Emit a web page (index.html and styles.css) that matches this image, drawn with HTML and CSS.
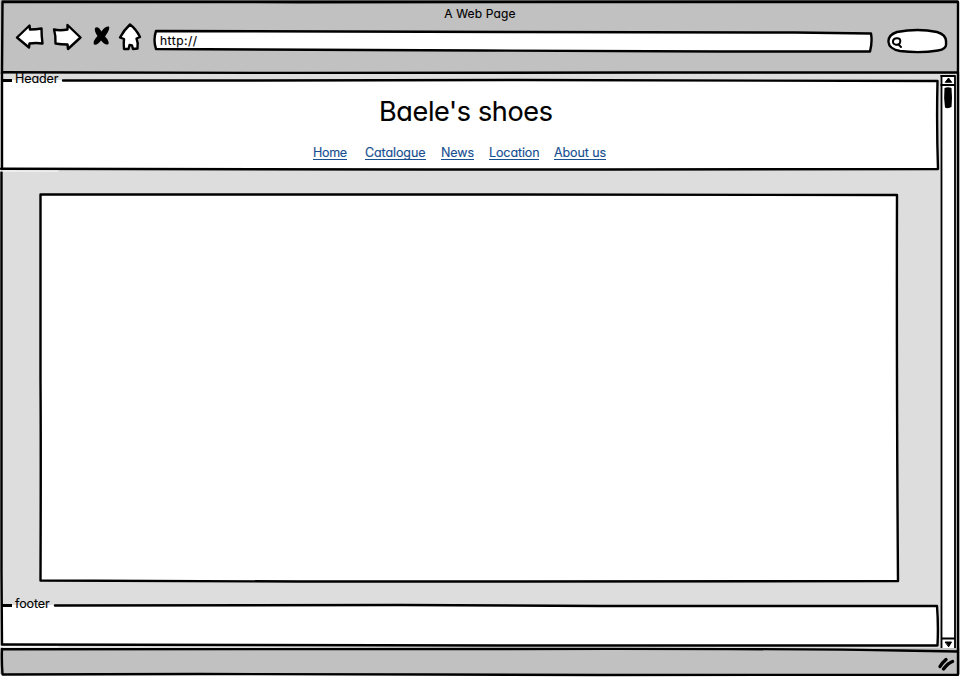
FILE: index.html
```html
<!DOCTYPE html>
<html lang="en">
<head>
<meta charset="utf-8">
<title>A Web Page</title>
<link rel="stylesheet" href="styles.css">
</head>
<body>
<div class="window">
  <header class="chrome">
    <div class="window-title">A Web Page</div>
    <div class="toolbar">
      <svg class="nav-icons" viewBox="14 20 130 34" aria-hidden="true">
        <path class="ink paper" d="M17 37.500L29.500 25.500L30 29.500Q36 29.500 41.500 28.500Q41.500 36 42.500 43.500Q36 42.500 29.500 43.500L29 47.500Z"/>
        <path class="ink paper" d="M54 29.500Q60 31 67.500 29.500L67.500 25L80.500 37.500L68 49L67.500 44.500Q61 44.500 55.500 43.500Q56 36 54 29.500Z"/>
        <path class="solid" d="M95 28Q98 25.500 101.500 31.500Q105 26 109 26.500Q110.500 29 105 36.500Q109.500 41 108.500 44Q105.500 46 101 40.500Q97.500 45.500 94 44.500Q92.500 41 97.500 36Q94 31 95 28Z"/>
        <path class="ink paper" d="M130 24.500Q136 29 140 37L136.500 38.500Q138.500 43 137.500 48.500L133 49L132 45.500L129.500 45L128.500 49L124 49Q123.500 43 124 39L120 37.500Q124 30 130 24.500Z"/>
      </svg>
      <div class="address">
        <svg class="sketch" viewBox="152 28 722 26" aria-hidden="true">
          <path class="ink paper" d="M156 31Q300 31.500 520 32T795 32.500L871 33.500Q872.500 42 870 51.500L720 51.500Q560 51 480 50.500T156 49Q153 40 156 31Z"/>
        </svg>
        <span class="url">http://</span>
      </div>
      <svg class="search" viewBox="886 26 62 28" aria-hidden="true">
        <path class="ink paper" d="M897 32Q918 28 937 32Q947 35 946 43Q947 49 938 50.500Q920 53.500 900 51Q889 49 888.500 42Q888 35 897 32Z"/>
        <path class="lens" d="M896.800 38.200C899.500 38 900.500 39.500 900.300 41.500C900 44 898.500 45 896 44.700C893.500 44.500 892.800 43 893 41C893.300 39 894.500 38.400 896.800 38.200ZM898.500 44.500L901 47"/>
      </svg>
    </div>
    <svg class="sketch" viewBox="0 0 960 74" aria-hidden="true">
      <path class="soft" d="M2 .500H958"/>
      <path class="ink" d="M2 74L2.500 2L300 2.200L958 2L958 74"/>
      <path class="ink" d="M2 72.300L300 73L640 72.500L958 72.500"/>
    </svg>
  </header>

  <div class="viewport">
    <main class="page">
      <section class="panel site-header">
        <svg class="sketch" viewBox="0 79 940 92" aria-hidden="true">
          <path class="paper" d="M2 80H937V169H2Z"/>
          <path class="ink" d="M63 80.500L240 80.500L520 80L937.500 81Q936.500 125 938 169L600 169.500L430 169.500L1 168.800"/>
          <path class="heavy" d="M2 80.500H12"/>
        </svg>
        <span class="legend">Header</span>
        <h1>Baele's shoes</h1>
        <nav>
          <a class="home">Home</a>
          <a class="catalogue">Catalogue</a>
          <a class="news">News</a>
          <a class="location">Location</a>
          <a class="about">About us</a>
        </nav>
      </section>

      <section class="content">
        <svg class="sketch" viewBox="38 192 862 392" aria-hidden="true">
          <path class="ink paper" d="M40.500 194.500L480 194.500L897 195Q896.500 380 898 581L520 581.500L300 581.500L40.500 580.500Q41 450 40.500 380Z"/>
        </svg>
      </section>

      <section class="panel site-footer">
        <svg class="sketch" viewBox="0 604 940 43" aria-hidden="true">
          <path class="paper" d="M2 605H937V645H2Z"/>
          <path class="ink" d="M55 605.500L400 605L600 606L937 606Q938.500 625 937.500 645.500L500 645.500L2 644.500"/>
          <path class="heavy" d="M2 605.500H12"/>
        </svg>
        <span class="legend">footer</span>
      </section>
    </main>

    <aside class="scrollbar">
      <svg class="sketch" viewBox="940 74 20 574" aria-hidden="true">
        <path class="paper" d="M941 76H955V649H941Z"/>
        <path class="fine" d="M941.500 76Q941 300 941.500 649M955 76L955 649M941 76H955M941 85H955M941.500 638.500H955M941.500 649H955"/>
        <path class="ink" d="M958 74V648"/>
        <path class="arrow" d="M945.500 82L948.500 78L951.500 82ZM945.500 642L951.500 642L948.800 646.500Z"/>
        <path class="solid" d="M944.500 88Q948 86.500 951.500 88Q952.500 98 951.500 107Q948 109 945 107.500Q943.500 98 944.500 88Z"/>
      </svg>
    </aside>
    <svg class="sketch" viewBox="0 74 960 574" aria-hidden="true">
      <path class="ink" d="M2 74L2 169M1.500 172L1.500 570L2 644"/>
      <path class="gap" d="M0 171H58M0 646.800H58"/>
    </svg>
  </div>

  <footer class="statusbar">
    <svg class="sketch" viewBox="0 648 960 29" aria-hidden="true">
      <path class="ink" d="M2 649.200L500 649Q800 648.500 900 650.500L958 651.500M958 648L958 674.800L600 675L430 674.500L200 674L2.500 674.500Q1.500 660 2 649"/>
      <path class="grip" d="M940 666.500Q942 663 946 659.500M943.500 669Q948 663 952.500 661.500"/>
    </svg>
  </footer>
</div>
</body>
</html>
```

FILE: styles.css
```css
* {
  box-sizing: border-box;
}

body {
  margin: 0;
  background: #fff;
  color: #000;
  font-family: Inter, "Open Sans", sans-serif;
  font-feature-settings: "cv11";
  font-size: 12.5px;
  line-height: 16px;
  -webkit-text-stroke: 0.15px currentColor;
}

.window {
  display: flex;
  flex-direction: column;
  width: 960px;
  height: 677px;
  overflow: hidden;
}

/* Hand-drawn outlines stretched behind their component */
.sketch {
  position: absolute;
  inset: 0;
  width: 100%;
  height: 100%;
  overflow: visible;
  pointer-events: none;
}

path {
  fill: none;
  stroke-linecap: round;
  stroke-linejoin: round;
}

.ink {
  stroke: #000;
  stroke-width: 2.4;
}

.paper {
  fill: #fff;
}

.fine {
  stroke: #000;
  stroke-width: 1.8;
}

.lens {
  stroke: #000;
  stroke-width: 2;
}

.heavy {
  stroke: #000;
  stroke-width: 3;
  stroke-linecap: butt;
}

.grip {
  stroke: #000;
  stroke-width: 3.4;
}

.arrow {
  fill: #000;
  stroke: #000;
  stroke-width: 1;
}

.soft {
  stroke: #555;
  stroke-width: 1;
}

.gap {
  stroke: #fff;
  stroke-width: 1;
}

.solid {
  fill: #000;
}

.chrome {
  position: relative;
  height: 74px;
  flex: none;
  background: linear-gradient(to right, #c1c1c1 958px, #fff 958px);
}

.window-title {
  height: 20px;
  padding-top: 6px;
  text-align: center;
  font-size: 12px;
  letter-spacing: 0.15px;
}

.toolbar {
  display: flex;
  align-items: flex-start;
  padding-left: 14px;
}

.nav-icons {
  width: 130px;
  height: 34px;
}

.address {
  position: relative;
  width: 722px;
  height: 26px;
  margin: 8px 12px 0 8px;
  padding: 5px 0 0 8px;
}

.url {
  position: relative;
  font-size: 12px;
  letter-spacing: 0.5px;
}

.search {
  width: 62px;
  height: 28px;
  margin-top: 6px;
}

.viewport {
  position: relative;
  display: flex;
  height: 574px;
  flex: none;
  background: #ddd;
}

.page {
  display: flex;
  flex-direction: column;
  width: 940px;
  padding-top: 5px;
}

.panel {
  position: relative;
}

.site-header {
  height: 92px;
}

.site-footer {
  height: 43px;
  margin-top: 20px;
}

.legend {
  position: absolute;
  top: -8px;
  left: 15px;
  letter-spacing: -0.1px;
}

h1 {
  position: relative;
  margin: 0;
  padding: 16px 0 0 379px;
  font-size: 27px;
  font-weight: 400;
  line-height: 34px;
  letter-spacing: -0.35px;
  white-space: nowrap;
}

nav {
  position: relative;
  display: flex;
  padding: 16px 0 0 313px;
  color: #174f91;
  letter-spacing: -0.1px;
}

nav a {
  height: 15px;
  border-bottom: 1px solid #174f91;
  white-space: nowrap;
}

.home {
  width: 34px;
  margin-right: 18px;
  letter-spacing: -0.3px;
}

.catalogue {
  width: 61px;
  margin-right: 15px;
}

.news {
  width: 33px;
  margin-right: 15px;
}

.location {
  width: 50px;
  margin-right: 15px;
}

.about {
  width: 52px;
}

.content {
  position: relative;
  width: 862px;
  height: 392px;
  margin: 21px 0 0 38px;
}

.scrollbar {
  position: relative;
  width: 20px;
}

.statusbar {
  position: relative;
  height: 29px;
  flex: none;
  background: linear-gradient(#c1c1c1 26px, #fff 26px);
}
```
